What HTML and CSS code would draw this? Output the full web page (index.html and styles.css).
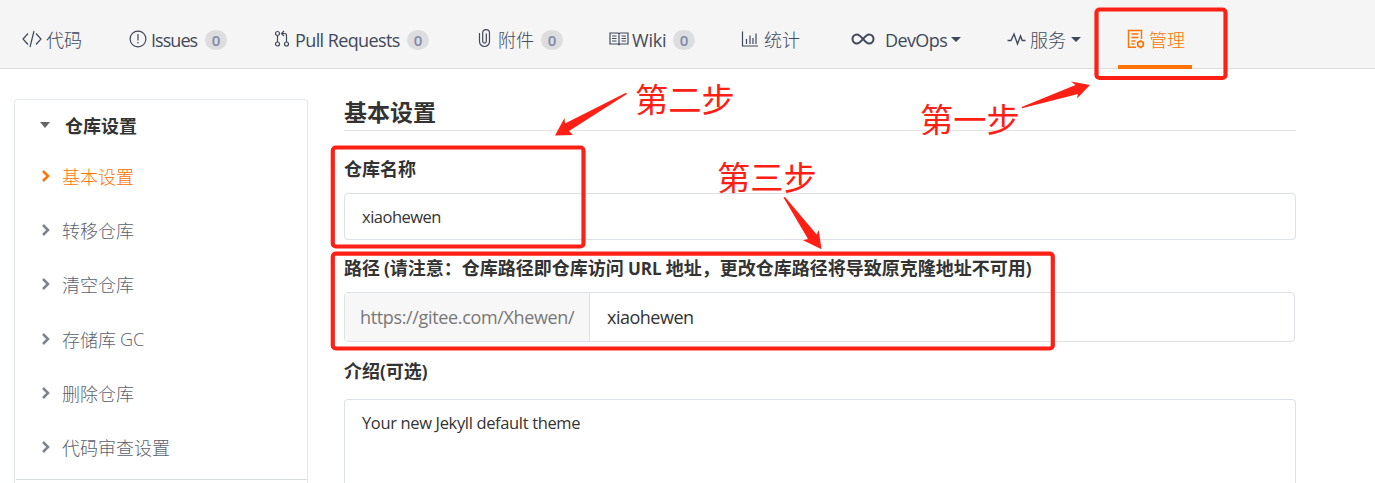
FILE: index.html
```html
<!DOCTYPE html>
<html lang="zh-CN">
<head>
<meta charset="utf-8">
<title>仓库设置</title>
<link rel="stylesheet" href="styles.css">
</head>
<body>
<nav class="nav">
  <a class="item w-code"><svg class="icon" width="20" height="18" viewBox="0 0 20 18"><path d="M6 3.500 1 9l5 5.500M14 3.500 19 9l-5 5.500M12 1 8 17"/></svg><span class="label">代码</span></a>
  <a class="item w-issues"><svg class="icon" width="18" height="18" viewBox="0 0 18 18"><circle cx="9" cy="9" r="7.900"/><path d="M9 4v6.500M9 12v1.600"/></svg><span class="label en l-issues">Issues</span><b class="badge">0</b></a>
  <a class="item w-pr"><svg class="icon" width="16" height="18" viewBox="0 0 16 18"><circle cx="3.500" cy="3.500" r="2"/><circle cx="3.500" cy="14" r="2"/><circle cx="12.500" cy="14" r="2"/><path d="M3.500 5.500V12M12.500 12V5.500q0-2-2-2H8M10 1 7.500 3.500 10 6"/></svg><span class="label en l-pr">Pull Requests</span><b class="badge">0</b></a>
  <a class="item w-attach"><svg class="icon" width="14" height="20" viewBox="0 0 14 20"><path d="M1.500 5v8.500a5 5 0 0 0 10 0V5a3.400 3.400 0 0 0-6.800 0v8.300a1.800 1.800 0 0 0 3.600 0V5.500"/></svg><span class="label">附件</span><b class="badge">0</b></a>
  <a class="item w-wiki"><svg class="icon" width="20" height="16" viewBox="0 0 20 16"><path d="M1 2h8l1 .8L11 2h8v11h-8l-1 .8L9 13H1zM10 2.800v11M3 5h4.500M3 7.500h4.500M3 10h4.500M12.500 5H17M12.500 7.500H17M12.500 10H17"/></svg><span class="label en l-wiki">Wiki</span><b class="badge">0</b></a>
  <a class="item w-stats"><svg class="icon" width="18" height="18" viewBox="0 0 18 18"><path d="M1.500 1.500v14.500H17M5.500 14V9M9 14V5.500M12 14V8M15 14V3.500"/></svg><span class="label">统计</span></a>
  <a class="item w-devops"><svg class="icon bold" width="24" height="12" viewBox="0 0 24 12"><path d="M12 6C9.500 3 8.300 1.500 6 1.500a4.500 4.500 0 0 0 0 9c2.300 0 3.500-1.500 6-4.500s3.700-4.500 6-4.500a4.500 4.500 0 0 1 0 9c-2.300 0-3.500-1.500-6-4.500z"/></svg><span class="label en l-devops">DevOps</span><i class="caret"></i></a>
  <a class="item w-service"><svg class="icon" width="19" height="16" viewBox="0 0 19 16"><path stroke-width="1.400" d="M.5 9.500H4L7 3l3.500 10 3-8 1.800 4.500H18.500"/></svg><span class="label">服务</span><i class="caret"></i></a>
  <a class="item active"><svg class="icon" width="18" height="20" viewBox="0 0 18 20"><path stroke-width="1.400" d="M9 18.200H1.500V1.500h13V10M4.500 5h7M4.500 8.500h7M4.500 12h4M4.500 15h3"/><path stroke-width="1.800" d="m13.500 12 2.700 1.600v3.200l-2.700 1.600-2.700-1.600v-3.200z"/></svg><span class="label">管理</span></a>
</nav>
<div class="page">
  <aside class="side">
    <div class="group"><i class="caret big"></i>仓库设置</div>
    <a class="link current"><svg class="chev" viewBox="0 0 8 12"><path d="m1 1 5 5-5 5"/></svg>基本设置</a>
    <a class="link"><svg class="chev" viewBox="0 0 8 12"><path d="m1 1 5 5-5 5"/></svg>转移仓库</a>
    <a class="link"><svg class="chev" viewBox="0 0 8 12"><path d="m1 1 5 5-5 5"/></svg>清空仓库</a>
    <a class="link"><svg class="chev" viewBox="0 0 8 12"><path d="m1 1 5 5-5 5"/></svg>存储库 <span class="gc">GC</span></a>
    <a class="link"><svg class="chev" viewBox="0 0 8 12"><path d="m1 1 5 5-5 5"/></svg>删除仓库</a>
    <a class="link"><svg class="chev" viewBox="0 0 8 12"><path d="m1 1 5 5-5 5"/></svg>代码审查设置</a>
    <div class="rule"></div>
  </aside>
  <main class="main">
    <h1 class="title">基本设置</h1>
    <h2 class="name-label">仓库名称</h2>
    <div class="field"><span class="v-name">xiaohewen</span></div>
    <h2 class="path-label">路径 <span class="paren">(</span>请注意：仓库路径即仓库访问 <span class="url">URL</span> 地址，更改仓库路径将导致原克隆地址不可用<span class="paren">)</span></h2>
    <div class="path">
      <span class="prefix"><span class="v-prefix">https://gitee.com/Xhewen/</span></span>
      <span class="value"><span class="v-path">xiaohewen</span></span>
    </div>
    <h2 class="intro-label">介绍<span class="paren">(</span>可选<span class="paren">)</span></h2>
    <div class="area"><span class="v-intro">Your new Jekyll default theme</span></div>
  </main>
</div>
<svg class="notes" width="1375" height="483" viewBox="0 0 1375 483">
  <g class="frames">
    <rect x="1096.500" y="9.500" width="129" height="68.500" rx="3"/>
    <rect x="332.800" y="147.500" width="250.700" height="99" rx="3"/>
    <rect x="332.800" y="253.700" width="720" height="94.800" rx="3"/>
  </g>
  <path d="M1022 108.200 1021.700 107 1075.500 85 1071 81.500 1090 85 1077 98.600 1078 94z"/>
  <path d="M627 94 626 92.800 565 123.500 564.500 118 555 135.500 573 135 569 131z"/>
  <path d="M783.500 197.500 785 197 816.700 234.500 818.700 230 821.500 249.300 803 240.300 808 239z"/>
  <text x="920" y="131.500">第一步</text>
  <text x="635" y="111.500">第二步</text>
  <text x="717" y="189.500">第三步</text>
</svg>
</body>
</html>
```
FILE: styles.css
```css
* { box-sizing: border-box; }
body {
  margin: 0;
  height: 483px;
  overflow: hidden;
  background: #fff;
  color: #333;
  font: 300 18px/24px "Noto Sans CJK SC", sans-serif;
}
.nav {
  display: grid;
  grid-template-columns: 107px 145px 204px 131px 132px 110px 156px 111px 74px;
  height: 69px;
  padding-left: 22px;
  background: #f5f5f5;
  border-bottom: 1px solid #dcdcdc;
  color: #40485b;
}
.item {
  display: flex;
  align-items: center;
  height: 68px;
  padding-top: 11px;
}
.w-issues { width: 98px; }
.w-pr { width: 155px; }
.w-attach { width: 85px; }
.w-wiki { width: 86px; }
.icon {
  flex: none;
  margin-right: 4px;
  margin-top: -2px;
  fill: none;
  stroke: currentColor;
  stroke-width: 1.2;
}
.w-pr .icon { margin-right: 5px; }
.w-attach .icon { margin-right: 6px; margin-top: -4px; }
.w-stats .icon { margin-right: 5px; }
.bold { stroke-width: 2; margin-right: 10px; }
.label { margin-top: -2px; white-space: nowrap; }
.en, .v-name, .v-prefix, .v-path, .v-intro, .gc {
  font-family: "Open Sans", sans-serif;
  white-space: nowrap;
}
.en { margin-top: 0; font-size: 18px; font-weight: 400; }
.l-issues { letter-spacing: -.95px; }
.l-pr { letter-spacing: -.6px; }
.l-wiki { letter-spacing: -.2px; margin-left: -1px; }
.l-devops { letter-spacing: -.6px; }
.badge {
  width: 22px;
  height: 20px;
  margin-left: auto;
  border-radius: 10px;
  background: #dcdddf;
  color: #8089a8;
  font: 600 15px/20px "Open Sans", sans-serif;
  text-align: center;
}
.caret {
  width: 0;
  margin-left: 4px;
  border: 5px solid transparent;
  border-top-color: currentColor;
  border-bottom: 0;
}
.w-service .caret { margin-left: 5px; }
.active {
  padding-left: 9px;
  height: 69px;
  border-bottom: 4px solid #fe7300;
  padding-top: 14px;
  color: #fe7300;
}
.page { display: flex; height: 414px; padding: 30px 0 0 14px; }
.side {
  width: 294px;
  height: 384px;
  border: 1px solid #e3e9ed;
  border-bottom: 0;
  border-radius: 4px 4px 0 0;
}
.group {
  display: flex;
  align-items: center;
  height: 49px;
  padding-left: 25px;
  font-weight: 700;
}
.big { margin: 0 15px 0 0; border-width: 6px 5px 0; color: #666; }
.link {
  display: flex;
  align-items: center;
  height: 54.2px;
  padding-left: 27px;
  color: #5a6270;
  white-space: pre;
}
.chev {
  width: 8px;
  height: 12px;
  margin-right: 12px;
  fill: none;
  stroke: #7d838c;
  stroke-width: 2.5;
}
.current { color: #fe7300; }
.current .chev { stroke: #fe7300; }
.gc { font-size: 18px; }
.rule { height: 1px; margin: 5px 0 0 1px; background: #d8dbde; }
.main { width: 952px; margin-left: 36px; }
.title {
  height: 32px;
  margin: 0;
  border-bottom: 1px solid #e3e3e5;
  font-size: 23px;
  line-height: 24px;
  font-weight: 700;
}
h2 { margin: 0; font-size: 18px; line-height: 24px; font-weight: 700; white-space: nowrap; }
.name-label { padding-top: 25px; height: 62px; }
.field, .path, .area { border: 1px solid #dde0e6; border-radius: 4px; }
.field { height: 47px; padding: 9px 17px; }
.v-name, .v-intro { font-size: 16.500px; font-weight: 400; letter-spacing: -.5px; }
.v-intro { letter-spacing: -.35px; }
.path-label { padding-top: 15px; height: 52px; }
.path { display: flex; width: 951px; height: 50px; overflow: hidden; }
.prefix {
  width: 245px;
  padding: 11px 15px;
  background: #f7f7f7;
  border-right: 1px solid #dde0e6;
  color: #777;
}
.value { padding: 11px 17px; }
.v-prefix, .v-path { font-size: 18px; font-weight: 400; letter-spacing: -.35px; }
.v-path { letter-spacing: -.5px; }
.intro-label { padding-top: 16px; height: 57px; }
.area { height: 84px; padding: 9px 17px; border-bottom: 0; border-radius: 4px 4px 0 0; }
.paren, .url { font-family: "Open Sans", sans-serif; font-size: 17px; }
.notes { position: absolute; left: 0; top: 0; fill: #ff2015; }
.frames { fill: none; stroke: #ff2015; stroke-width: 4.2; }
.notes text { font: 400 33.300px "Noto Sans CJK SC", sans-serif; }
```
